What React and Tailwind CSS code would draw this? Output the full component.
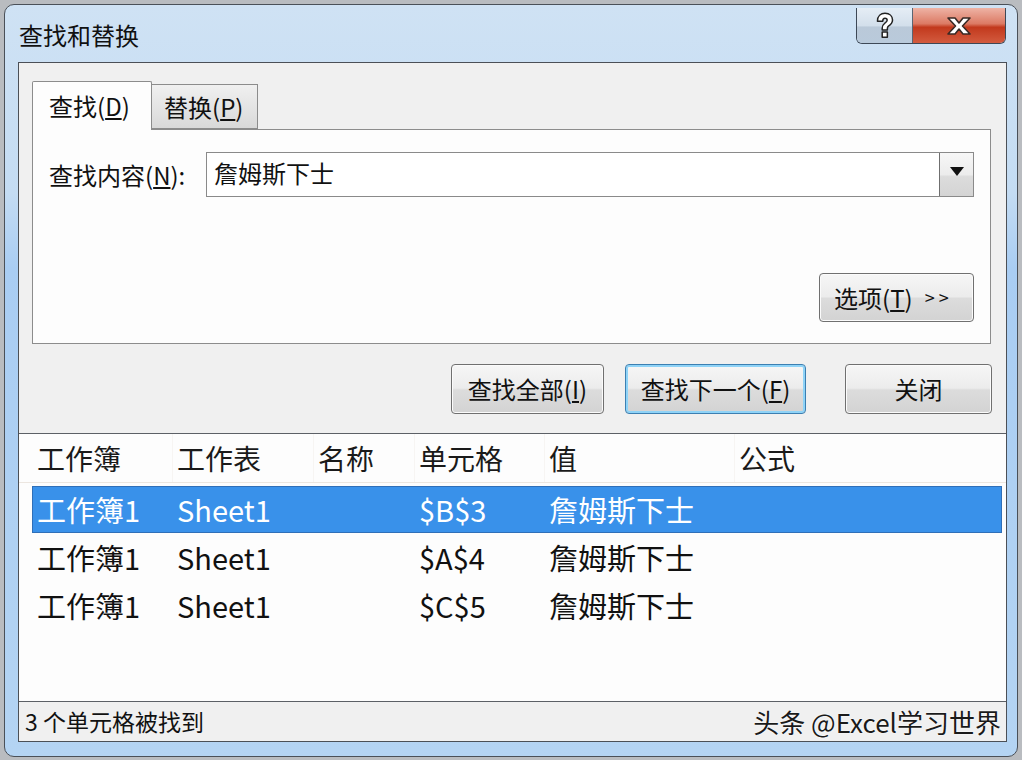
import React from 'react';

const font = { fontFamily: '"Noto Sans CJK SC", "Noto Sans", sans-serif' };

const columns = [
  { key: 'book', label: '工作簿', w: 'w-[140px]' },
  { key: 'sheet', label: '工作表', w: 'w-[141px]' },
  { key: 'name', label: '名称', w: 'w-[101px]' },
  { key: 'cell', label: '单元格', w: 'w-[130px]' },
  { key: 'value', label: '值', w: 'w-[190px]' },
  { key: 'formula', label: '公式', w: 'flex-1' },
];

const rows = [
  { book: '工作簿1', sheet: 'Sheet1', name: '', cell: '$B$3', value: '詹姆斯下士', formula: '' },
  { book: '工作簿1', sheet: 'Sheet1', name: '', cell: '$A$4', value: '詹姆斯下士', formula: '' },
  { book: '工作簿1', sheet: 'Sheet1', name: '', cell: '$C$5', value: '詹姆斯下士', formula: '' },
];

const Button = ({ children, className = '', focused = false }) => (
  <button
    className={`relative flex items-center justify-center rounded-[4px] border text-[24px] text-[#111] bg-[linear-gradient(#f6f6f6_0%,#ececec_48%,#dcdcdc_52%,#d3d3d3_100%)] ${
      focused ? 'border-[#3c7fb1] shadow-[inset_0_0_0_2px_#8fd3f7]' : 'border-[#707070] shadow-[inset_0_0_0_1px_#fbfbfb]'
    } ${className}`}
  >
    {children}
  </button>
);

const App = () => {
  return (
    <div className="w-[1022px] h-[760px] bg-[#b9bcc0] pl-[4px] pr-[4px] pt-[4px] pb-[3px] flex" style={font}>
      <div className="flex-1 flex flex-col rounded-[10px] border border-[#4a5058] bg-[linear-gradient(180deg,#cfe2f4_0%,#c4dcf3_25%,#a9cdf3_35%,#b4d4f3_100%)] pl-[13px] pr-[10px] pb-[14px]">
        {/* title bar */}
        <div className="h-[57px] flex items-start relative">
          <div className="pt-[13px] pl-[1px] text-[24px] text-[#111] leading-[34px]">查找和替换</div>
          <div className="ml-auto mr-[1px] mt-[3px] flex h-[36px] border border-t-0 border-[#3d4856] rounded-b-[6px] overflow-hidden">
            <div className="w-[56px] flex items-center justify-center border-r border-[#5a6572] bg-[linear-gradient(#e5edf5_0%,#d3dfeb_50%,#bac9d9_55%,#b9cadb_100%)]">
              <svg width="20" height="28" viewBox="0 0 18 26">
                <path
                  d="M2 8.5 C2 3.5 5.2 1.2 9 1.2 C13.3 1.2 16 3.9 16 7.5 C16 10.6 14 12 12.2 13.2 C11.4 13.8 11.2 14.3 11.2 15.5 L11.2 16.8 L6.4 16.8 L6.4 15 C6.4 12.5 7.4 11.4 9 10.2 C10.3 9.2 11 8.7 11 7.6 C11 6.4 10.2 5.7 9 5.7 C7.7 5.7 6.9 6.6 6.9 8.5 Z M6.4 18.6 L11.2 18.6 L11.2 23.5 L6.4 23.5 Z"
                  fill="#fff"
                  stroke="#222"
                  strokeWidth="1.4"
                  strokeLinejoin="round"
                />
              </svg>
            </div>
            <div className="w-[92px] flex items-center justify-center bg-[linear-gradient(#eeb3a5_0%,#dc7a64_45%,#c2391d_55%,#d35b3f_100%)]">
              <svg width="30" height="22" viewBox="0 0 30 22">
                <path
                  d="M4 3 L11 3 L15 8 L19 3 L26 3 L18.5 11 L26 19 L19 19 L15 14 L11 19 L4 19 L11.5 11 Z"
                  fill="#fff"
                  stroke="#3a2a26"
                  strokeWidth="1.6"
                  strokeLinejoin="round"
                />
              </svg>
            </div>
          </div>
        </div>

        {/* client area */}
        <div className="flex-1 flex flex-col border border-[#4b5057] bg-[#f0f0f0]">
          <div className="pl-[13px] pr-[15px] pt-[17px]">
            {/* tabs */}
            <div className="flex items-end h-[49px]">
              <div className="w-[120px] h-[49px] -mb-[1px] relative z-10 border border-b-0 border-[#8c8c8c] bg-[#fdfdfd] rounded-t-[2px] flex items-center pl-[16px] text-[24px] text-[#111]">
                查找(<span className="underline underline-offset-2">D</span>)
              </div>
              <div className="w-[106px] h-[45px] border border-l-0 border-[#8c8c8c] bg-[linear-gradient(#f0f0f0,#d9d9d9)] flex items-center pl-[12px] text-[24px] text-[#111]">
                替换(<span className="underline underline-offset-2">P</span>)
              </div>
            </div>
            {/* panel */}
            <div className="h-[215px] border border-[#8c8c8c] bg-[#fdfdfd] flex flex-col pl-[16px] pr-[16px] pt-[22px] pb-[21px]">
              <div className="flex items-center">
                <div className="w-[157px] text-[24px] text-[#111] whitespace-nowrap">
                  查找内容(<span className="underline underline-offset-2">N</span>):
                </div>
                <div className="flex-1 h-[45px] flex border border-[#8a8a8a] bg-white">
                  <div className="flex-1 pl-[7px] text-[24px] text-[#111] leading-[40px]">詹姆斯下士</div>
                  <div className="w-[34px] border-l border-[#6f6f6f] bg-[linear-gradient(#f7f7f7_0%,#ececec_50%,#dcdcdc_55%,#d4d4d4_100%)] flex items-start justify-center pt-[14px]">
                    <svg width="14" height="9" viewBox="0 0 14 9">
                      <path d="M0 0 H14 L7 9 Z" fill="#111" />
                    </svg>
                  </div>
                </div>
              </div>
              <div className="mt-auto flex justify-end">
                <Button className="w-[155px] h-[49px] justify-start pl-[14px]">
                  选项(<span className="underline underline-offset-2">T</span>)<span className="ml-[12px] text-[18px] tracking-[4px]">&gt;&gt;</span>
                </Button>
              </div>
            </div>
          </div>

          {/* action buttons */}
          <div className="flex justify-end items-center pr-[14px] mt-[20px] mb-[19px]">
            <Button className="w-[153px] h-[50px]">
              查找全部(<span className="underline underline-offset-2">I</span>)
            </Button>
            <Button focused className="w-[181px] h-[50px] ml-[21px]">
              查找下一个(<span className="underline underline-offset-2">F</span>)
            </Button>
            <Button className="w-[147px] h-[50px] ml-[39px]">关闭</Button>
          </div>

          {/* results list */}
          <div className="flex-1 flex flex-col border-t border-[#5c6066] bg-[#fdfdfd]">
            <div className="flex h-[49px] items-center pl-[14px] pr-[4px] border-b border-[#ece6e0]">
              {columns.map((c) => (
                <div key={c.key} className={`${c.w} h-full flex items-center pl-[4px] text-[28px] text-[#1a1a1a] border-r border-[#f7f5f3] last:border-r-0 whitespace-nowrap`}>
                  {c.label}
                </div>
              ))}
            </div>
            <div className="pl-[13px] pr-[4px] pt-[3px]">
              {rows.map((r, i) => (
                <div
                  key={i}
                  className={`flex h-[47px] items-center mb-[1px] ${
                    i === 0 ? 'bg-[#3991ea] text-white border border-[#2f6fb8]' : 'text-[#111] border border-transparent'
                  }`}
                >
                  {columns.map((c) => (
                    <div key={c.key} className={`${c.w} pl-[4px] text-[29px] whitespace-nowrap`}>
                      {r[c.key]}
                    </div>
                  ))}
                </div>
              ))}
            </div>
          </div>

          {/* status bar */}
          <div className="h-[40px] flex items-center border-t border-[#5c6066] bg-[#f0f0f0] pl-[6px] pr-[5px]">
            <span className="text-[23px] text-[#111]">3 个单元格被找到</span>
            <span className="ml-auto text-[26px] text-[#1a1a1a] [text-shadow:0_0_2px_#fff,0_0_1px_#fff]">
              头条 @Excel学习世界
            </span>
          </div>
        </div>
      </div>
    </div>
  );
};

export default App;
